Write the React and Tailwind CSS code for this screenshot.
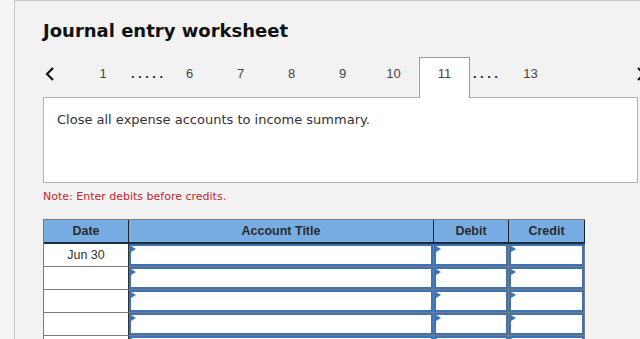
import React from "react";

const rows = ["Jun 30", "", "", "", ""];

function Chevron({ dir = "left" }) {
  return (
    <svg width="10" height="14" viewBox="0 0 10 14">
      <polyline
        points={dir === "left" ? "8,1 2,7 8,13" : "2,1 8,7 2,13"}
        fill="none"
        stroke="#111"
        strokeWidth="2.2"
      />
    </svg>
  );
}

function Flag() {
  return (
    <svg className="absolute left-0 top-0" width="5" height="7" viewBox="0 0 5 7">
      <polygon points="0,0 5,3 0,6" fill="#3a74bd" />
    </svg>
  );
}

function InputCell() {
  return (
    <div className="h-[23px] border-b border-r border-[#7a7a7a] bg-white">
      <div className="relative h-full border-2 border-[#3d72b4] bg-white">
        <Flag />
      </div>
    </div>
  );
}

function HeadCell({ children }) {
  return (
    <div className="flex h-[24px] items-center justify-center border-b-2 border-r border-b-[#1d2b3c] border-r-[#222] bg-[#78ade3] text-[12.5px] font-bold text-[#2b2b2b]">
      {children}
    </div>
  );
}

export default function App() {
  const nav = [
    { label: "1", w: "w-[50px]" },
    { label: ".....", w: "w-[36px]", dots: true },
    { label: "6", w: "w-[51px]" },
    { label: "7", w: "w-[51px]" },
    { label: "8", w: "w-[51px]" },
    { label: "9", w: "w-[51px]" },
    { label: "10", w: "w-[51px]" },
    { label: "11", w: "w-[51px]", active: true },
    { label: "....", w: "w-[35px]", dots: true },
    { label: "13", w: "w-[51px]" },
  ];

  return (
    <div className="w-[640px] h-[339px] overflow-hidden bg-[#f4f4f4]">
      <div className="ml-[14px] h-[339px] border-l border-t border-[#c6c6c6] bg-[#f2f2f2] pl-[28px] pt-[20px]">
        <h1 className="font-['DejaVu_Sans',sans-serif] text-[18px] leading-[20px] font-bold text-[#111]">
          Journal entry worksheet
        </h1>

        {/* step tabs */}
        <div className="mt-[16px] flex h-[40px] items-start">
          <div className="w-[35px] pt-[10px] pl-[2px]">
            <Chevron dir="left" />
          </div>
          {nav.map((n, i) => (
            <div
              key={i}
              className={`${n.w} text-center font-['Liberation_Sans',Arial,sans-serif] ${
                n.active
                  ? "relative z-10 h-[41px] border border-b-0 border-[#9a9a9a] bg-white pt-[8px] text-[#333]"
                  : "h-[40px] pt-[9px]"
              } ${n.dots ? "text-left pl-[3px] text-[13px] font-bold tracking-[3.5px] text-[#222]" : "text-[13px] text-[#444]"} leading-[16px]`}
            >
              {n.label}
            </div>
          ))}
          <div className="ml-auto pt-[10px] -mr-[6px]">
            <Chevron dir="right" />
          </div>
        </div>

        {/* instruction box */}
        <div className="h-[86px] w-[595px] border border-[#b3b3b3] bg-white pl-[13px] pt-[14px]">
          <p className="font-['DejaVu_Sans',sans-serif] text-[13px] leading-[16px] text-[#333]">
            Close all expense accounts to income summary.
          </p>
        </div>

        <p className="mt-[7px] font-['DejaVu_Sans',sans-serif] text-[11px] leading-[14px] text-[#c1272d]">
          Note: Enter debits before credits.
        </p>

        {/* journal table */}
        <div className="mt-[15px] grid w-[542px] grid-cols-[85px_305px_75px_76px] border-l border-t border-[#7a7a7a] font-['Liberation_Sans',Arial,sans-serif]">
          <HeadCell>Date</HeadCell>
          <HeadCell>Account Title</HeadCell>
          <HeadCell>Debit</HeadCell>
          <HeadCell>Credit</HeadCell>
          {rows.map((d, i) => (
            <React.Fragment key={i}>
              <div className="flex h-[23px] items-center justify-center border-b border-r border-b-[#7a7a7a] border-r-[#333] bg-white text-[12.5px] text-[#333]">
                {d}
              </div>
              <InputCell />
              <InputCell />
              <InputCell />
            </React.Fragment>
          ))}
        </div>
      </div>
    </div>
  );
}
